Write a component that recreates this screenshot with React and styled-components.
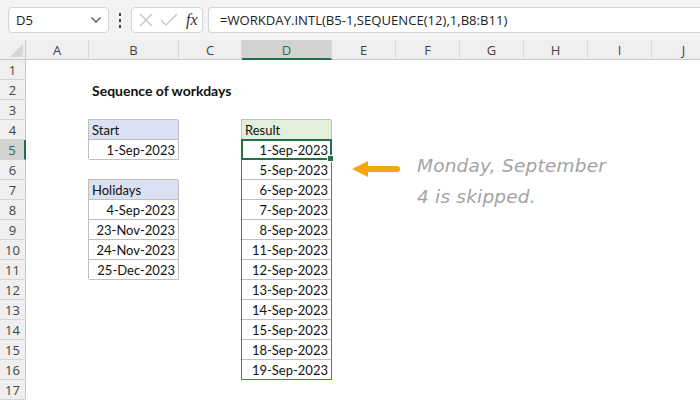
import React from 'react';
import styled, { createGlobalStyle } from 'styled-components';

const GlobalStyle = createGlobalStyle`
    html, body {
        margin: 0;
        padding: 0;
        background: #ffffff;
    }
    body {
        width: 700px;
        height: 400px;
        overflow: hidden;
        font-family: "Lato", "Liberation Sans", sans-serif;
    }
`;

const GREEN = '#217346';
const BLUE = '#4472c4';
const LINE = '#bfbfbf';

const Janela = styled.div`
    width: 700px;
    height: 400px;
    display: flex;
    flex-direction: column;
    overflow: hidden;
`;

const BarraFormula = styled.div`
    height: 40px;
    flex-shrink: 0;
    background: #f3f3f3;
    display: flex;
    align-items: flex-start;
    padding: 7px 0 0 8px;
    box-sizing: border-box;
`;

const CaixaNome = styled.div`
    width: 101px;
    height: 26px;
    box-sizing: border-box;
    background: #ffffff;
    border: 1px solid #d4d4d4;
    border-radius: 4px;
    display: flex;
    align-items: center;
    justify-content: space-between;
    padding: 0 6px 0 7px;
    font-family: "Open Sans", "Noto Sans", sans-serif;
    font-size: 13px;
    color: #222;
`;

const Pontos = styled.div`
    width: 22px;
    display: flex;
    flex-direction: column;
    align-items: center;
    gap: 3px;
    padding-top: 6px;

    span {
        width: 2px;
        height: 3px;
        background: #444;
    }
`;

const CaixaFx = styled.div`
    width: 72px;
    height: 26px;
    box-sizing: border-box;
    background: #ffffff;
    border: 1px solid #d4d4d4;
    border-radius: 4px;
    display: flex;
    align-items: center;
    padding: 0 4px 0 6px;
    gap: 6px;
`;

const Fx = styled.span`
    font-family: "Liberation Serif", serif;
    font-style: italic;
    font-size: 16px;
    color: #333;
    margin-left: 2px;
`;

const CampoFormula = styled.div`
    flex: 1;
    height: 26px;
    margin-left: 5px;
    box-sizing: border-box;
    background: #ffffff;
    border: 1px solid #d4d4d4;
    border-right: none;
    border-radius: 4px 0 0 4px;
    display: flex;
    align-items: center;
    padding-left: 11px;
    font-family: "Open Sans", "Noto Sans", sans-serif;
    font-size: 13.1px;
    color: #222;
    white-space: nowrap;
`;

const Planilha = styled.div`
    flex: 1;
    display: grid;
    grid-template-columns: 26px 63px 90px 63px 90px repeat(6, 64px);
    grid-template-rows: repeat(18, 20px);
    overflow: hidden;
    background: #ffffff;
`;

const Canto = styled.div`
    grid-column: 1;
    grid-row: 1;
    background: #efefef;
    border-right: 1px solid #c8c8c8;
    border-bottom: 1px solid #c8c8c8;
    display: flex;
    align-items: flex-end;
    justify-content: flex-end;
    padding: 0 2px 2px 0;
`;

const CabecalhoColuna = styled.div`
    grid-column: ${p => p.$c};
    grid-row: 1;
    background: ${p => (p.$ativo ? '#d2d2d2' : '#efefef')};
    border-right: 1px solid #d9d9d9;
    border-bottom: ${p => (p.$ativo ? `2px solid ${GREEN}` : '1px solid #c8c8c8')};
    display: flex;
    align-items: center;
    justify-content: center;
    font-family: "Open Sans", "Noto Sans", sans-serif;
    font-size: 13px;
    color: ${p => (p.$ativo ? GREEN : '#444')};
    padding-top: 1px;
`;

const CabecalhoLinha = styled.div`
    grid-column: 1;
    grid-row: ${p => p.$r};
    background: ${p => (p.$ativo ? '#d2d2d2' : '#efefef')};
    border-right: ${p => (p.$ativo ? `2px solid ${GREEN}` : '1px solid #c8c8c8')};
    border-bottom: 1px solid #d4d4d4;
    display: flex;
    align-items: center;
    justify-content: center;
    font-family: "Open Sans", "Noto Sans", sans-serif;
    font-size: 13px;
    color: ${p => (p.$ativo ? GREEN : '#444')};
`;

const Celula = styled.div`
    grid-column: ${p => p.$c};
    grid-row: ${p => p.$r};
    display: flex;
    align-items: center;
    justify-content: ${p => (p.$num ? 'flex-end' : 'flex-start')};
    padding: 0 3px 0 3px;
    font-size: 13px;
    color: #111;
    white-space: nowrap;
    background: ${p => p.$fundo || 'transparent'};
`;

const Titulo = styled(Celula)`
    font-weight: 700;
    font-size: 14px;
`;

const CelulaTabela = styled(Celula)`
    border-right: 1px solid ${LINE};
    border-bottom: 1px solid ${LINE};
    box-shadow: -1px -1px 0 0 ${LINE};
`;

const CelulaResultado = styled(Celula)`
    border-right: 1px solid ${BLUE};
    border-bottom: 1px solid ${p => (p.$ultimo ? BLUE : LINE)};
    box-shadow: -1px 0 0 0 ${BLUE};
`;

const Selecao = styled.div`
    grid-column: 5;
    grid-row: 6;
    position: relative;
    margin: -1px 0 0 -1px;
    border: 2px solid ${GREEN};
    pointer-events: none;
`;

const AlcaPreenchimento = styled.span`
    position: absolute;
    right: -4px;
    bottom: -4px;
    width: 5px;
    height: 5px;
    background: ${GREEN};
    border: 1px solid #ffffff;
`;

const Anotacao = styled.div`
    grid-column: 6 / 12;
    grid-row: 6 / 9;
    display: flex;
    align-items: flex-start;
    padding: 10px 0 0 20px;
    gap: 17px;
`;

const TextoNota = styled.div`
    font-family: "DejaVu Sans", sans-serif;
    font-style: italic;
    font-weight: 300;
    font-size: 18.5px;
    line-height: 31px;
    color: #a3a3a3;
    white-space: pre-line;
    letter-spacing: 0.2px;
`;

const Seta = () => (
    <svg width="48" height="18" viewBox="0 0 48 18" style={{ marginTop: 10, flexShrink: 0 }}>
        <polygon points="0,9 16,1 16,17" fill="#f5a50f" />
        <line x1="14" y1="9" x2="45" y2="9" stroke="#f5a50f" strokeWidth="6" strokeLinecap="round" />
    </svg>
);

const colunas = ['A', 'B', 'C', 'D', 'E', 'F', 'G', 'H', 'I', 'J'];

const feriados = ['4-Sep-2023', '23-Nov-2023', '24-Nov-2023', '25-Dec-2023'];

const resultados = [
    '1-Sep-2023', '5-Sep-2023', '6-Sep-2023', '7-Sep-2023', '8-Sep-2023', '11-Sep-2023',
    '12-Sep-2023', '13-Sep-2023', '14-Sep-2023', '15-Sep-2023', '18-Sep-2023', '19-Sep-2023',
];

// linha da planilha -> linha do grid (a 1 e o cabecalho)
const g = (linha) => linha + 1;

const App = () => {
    return (
        <Janela>
            <GlobalStyle />
            <BarraFormula>
                <CaixaNome>
                    <span>D5</span>
                    <svg width="12" height="8" viewBox="0 0 12 8">
                        <polyline points="1.5,1.5 6,6 10.5,1.5" fill="none" stroke="#555" strokeWidth="1.3" />
                    </svg>
                </CaixaNome>
                <Pontos>
                    <span />
                    <span />
                    <span />
                </Pontos>
                <CaixaFx>
                    <svg width="16" height="16" viewBox="0 0 16 16">
                        <path d="M2 2 L14 14 M14 2 L2 14" stroke="#c4c4c4" strokeWidth="1.2" fill="none" />
                    </svg>
                    <svg width="18" height="16" viewBox="0 0 18 16">
                        <polyline points="1,8 6,13 17,2" stroke="#c4c4c4" strokeWidth="1.2" fill="none" />
                    </svg>
                    <Fx>fx</Fx>
                </CaixaFx>
                <CampoFormula>=WORKDAY.INTL(B5-1,SEQUENCE(12),1,B8:B11)</CampoFormula>
            </BarraFormula>

            <Planilha>
                <Canto>
                    <svg width="13" height="13" viewBox="0 0 13 13">
                        <polygon points="13,0 13,13 0,13" fill="#d6d6d6" />
                    </svg>
                </Canto>
                {colunas.map((c, i) => (
                    <CabecalhoColuna key={c} $c={i + 2} $ativo={c === 'D'}>{c}</CabecalhoColuna>
                ))}
                {Array.from({ length: 17 }, (_, i) => (
                    <CabecalhoLinha key={i} $r={g(i + 1)} $ativo={i + 1 === 5}>{i + 1}</CabecalhoLinha>
                ))}

                <Titulo $c={3} $r={g(2)}>Sequence of workdays</Titulo>

                <CelulaTabela $c={3} $r={g(4)} $fundo="#d9e1f2">Start</CelulaTabela>
                <CelulaTabela $c={3} $r={g(5)} $num>1-Sep-2023</CelulaTabela>

                <CelulaTabela $c={3} $r={g(7)} $fundo="#d9e1f2">Holidays</CelulaTabela>
                {feriados.map((f, i) => (
                    <CelulaTabela key={f} $c={3} $r={g(8 + i)} $num>{f}</CelulaTabela>
                ))}

                <CelulaTabela $c={5} $r={g(4)} $fundo="#e2efda">Result</CelulaTabela>
                {resultados.map((d, i) => (
                    <CelulaResultado key={d} $c={5} $r={g(5 + i)} $num $ultimo={i === resultados.length - 1}>
                        {d}
                    </CelulaResultado>
                ))}

                <Selecao>
                    <AlcaPreenchimento />
                </Selecao>

                <Anotacao>
                    <Seta />
                    <TextoNota>{'Monday, September\n4 is skipped.'}</TextoNota>
                </Anotacao>
            </Planilha>
        </Janela>
    );
};

export default App;
